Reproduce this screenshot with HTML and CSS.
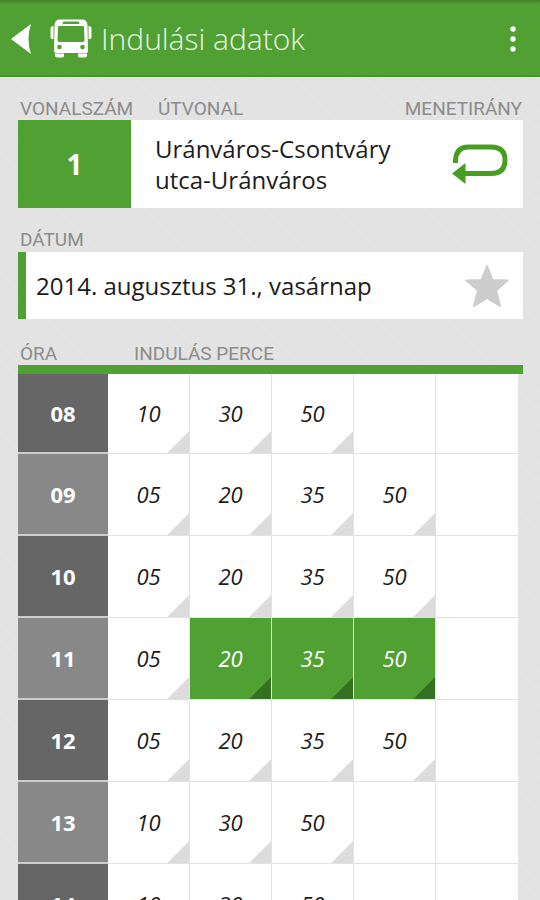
FILE: index.html
```html
<!DOCTYPE html>
<html lang="hu">
<head>
  <meta charset="utf-8">
  <meta name="viewport" content="width=device-width, initial-scale=1">
  <title>Indulási adatok</title>
  <link rel="stylesheet" href="styles.css">
</head>
<body>
  <header class="topbar">
    <button class="back" aria-label="Vissza">
      <svg width="21" height="30" viewBox="0 0 21 30"><path d="M0 15 L20 0 Q15 15 20 30 Z" fill="#fff"/></svg>
    </button>
    <svg class="bus" width="42" height="39" viewBox="0 0 42 39">
      <path fill="#fff" fill-rule="evenodd" d="M9 0.5 H33 Q37 1 37.500 6 L38 32 Q38 34 36 34 H6 Q4 34 4 32 L4.500 6 Q5 1 9 .5 Z M14 2.500 Q12.500 2.500 12.500 4 Q12.500 5 14 5 H28 Q29.500 5 29.500 4 Q29.500 2.500 28 2.500 Z M9 7 Q8 7 8 8 L7.500 21 Q7.500 23 9 23 H33 Q34.500 23 34.500 21 L34 8 Q34 7 33 7 Z"/>
      <path fill="#fff" d="M3.500 7 V20 H2 Q.5 20 .5 18 V10 Q.5 7 3.500 7 Z M38.500 7 V20 H40 Q41.500 20 41.500 18 V10 Q41.500 7 38.500 7 Z M5 34.500 H14 V37 Q13.500 38.500 12 38.500 H7 Q5 38.500 5 36.500 Z M28 34.500 H37 V36.500 Q37 38.500 35 38.500 H30 Q28.500 38.500 28 37 Z"/>
      <circle cx="9.500" cy="28" r="2.300" fill="#50a033"/>
      <circle cx="32.500" cy="28" r="2.300" fill="#50a033"/>
    </svg>
    <h1>Indulási adatok</h1>
    <button class="menu" aria-label="Menü">
      <svg width="6" height="26" viewBox="0 0 6 26" fill="#fff"><circle cx="3" cy="3" r="2.700"/><circle cx="3" cy="13" r="2.700"/><circle cx="3" cy="23" r="2.700"/></svg>
    </button>
  </header>

  <main class="content">
    <section>
      <div class="labels">
        <span class="label-line">VONALSZÁM</span>
        <span>ÚTVONAL</span>
        <span class="label-right">MENETIRÁNY</span>
      </div>
      <div class="card route">
        <div class="line">1</div>
        <div class="stops">Uránváros-Csontváry utca-Uránváros</div>
        <button class="direction" aria-label="Menetirány váltása">
          <svg width="56" height="42" viewBox="0 0 56 42">
            <path d="M3.500 20 V17 Q4.500 4 16 4 H39 Q53 4 53 17 Q53 30.500 39 30.500 H12" fill="none" stroke="#469d22" stroke-width="5"/>
            <path d="M0 30.500 L13.500 20 V41 Z" fill="#469d22"/>
          </svg>
        </button>
      </div>
    </section>

    <section>
      <div class="labels">
        <span>DÁTUM</span>
      </div>
      <div class="card date">
        <button class="date-value">2014. augusztus 31., vasárnap</button>
        <button class="favourite" aria-label="Kedvenc">
          <svg width="44" height="42" viewBox="0 0 44 42">
            <path d="M22 1 L27.500 15 L42.500 15.500 L31 25.500 L35 41 L22 33 L9 41 L13 25.500 L1.500 15.500 L16.500 15 Z" fill="#cdcdcd" stroke="#cdcdcd" stroke-width="2" stroke-linejoin="round"/>
          </svg>
        </button>
      </div>
    </section>

    <section>
      <div class="labels times-head">
        <span class="label-hour" id="hour">ÓRA</span>
        <span id="minutes">INDULÁS PERCE</span>
      </div>
      <table class="times" aria-labelledby="hour minutes">
        <tr>
          <th scope="row">08</th>
          <td class="dep">10</td><td class="dep">30</td><td class="dep">50</td><td></td><td></td>
        </tr>
        <tr>
          <th scope="row">09</th>
          <td class="dep">05</td><td class="dep">20</td><td class="dep">35</td><td class="dep">50</td><td></td>
        </tr>
        <tr>
          <th scope="row">10</th>
          <td class="dep">05</td><td class="dep">20</td><td class="dep">35</td><td class="dep">50</td><td></td>
        </tr>
        <tr>
          <th scope="row">11</th>
          <td class="dep">05</td><td class="dep next">20</td><td class="dep next">35</td><td class="dep next">50</td><td></td>
        </tr>
        <tr>
          <th scope="row">12</th>
          <td class="dep">05</td><td class="dep">20</td><td class="dep">35</td><td class="dep">50</td><td></td>
        </tr>
        <tr>
          <th scope="row">13</th>
          <td class="dep">10</td><td class="dep">30</td><td class="dep">50</td><td></td><td></td>
        </tr>
        <tr>
          <th scope="row">14</th>
          <td class="dep">10</td><td class="dep">30</td><td class="dep">50</td><td></td><td></td>
        </tr>
      </table>
    </section>
  </main>
</body>
</html>
```
FILE: styles.css
```css
* {
  box-sizing: border-box;
}
body {
  display: flex;
  flex-direction: column;
  height: 100vh;
  margin: 0;
  font-family: "Open Sans", "Noto Sans", sans-serif;
  color: #1c1c1c;
  background: repeating-linear-gradient(45deg, #e5e5e5 0 1px, #e2e2e2 1px 3px);
}
button {
  padding: 0;
  border: none;
  background: none;
  font: inherit;
  color: inherit;
  cursor: pointer;
}
svg {
  display: block;
}

/* top bar */
.topbar {
  display: flex;
  flex: none;
  align-items: center;
  height: 77px;
  padding: 2px 24px 0 11px;
  background: linear-gradient(#447f2d, #50a033 4px);
  border-bottom: 2px solid #459527;
}
.bus {
  margin-left: 18px;
}
.topbar h1 {
  flex: 1;
  margin: 0 0 0 9px;
  font-size: 30px;
  font-weight: 300;
  color: #e9f5e4;
}

/* content */
.content {
  flex: 1;
  padding: 20px 17px 0 18px;
  overflow-y: auto;
  scrollbar-width: none;
}
.labels {
  display: flex;
  align-items: flex-end;
  height: 23px;
  padding: 0 1px 0 2px;
  font-family: Roboto, sans-serif;
  font-size: 19px;
  line-height: 22px;
  color: #8c8c8c;
}
.label-line {
  width: 138px;
}
.label-hour {
  width: 114px;
}
.label-right {
  margin-left: auto;
}
.card {
  display: flex;
  align-items: center;
  background: #fff;
}
.route {
  height: 88px;
  margin-bottom: 20px;
  padding-right: 15px;
}
.line {
  display: flex;
  align-items: center;
  justify-content: center;
  align-self: stretch;
  width: 113px;
  font-size: 28px;
  font-weight: 700;
  color: #fff;
  background: #50a033;
}
.stops {
  flex: 1;
  padding: 0 40px 0 24px;
  font-size: 24px;
  line-height: 31px;
}
.date {
  height: 67px;
  margin: 1px 0 24px;
  padding: 0 14px 0 10px;
  border-left: 8px solid #50a033;
}
.date-value {
  flex: 1;
  font-size: 24px;
  text-align: left;
}

/* departures */
.times-head {
  height: 31px;
  border-bottom: 9px solid #50a033;
}
.times {
  width: calc(100% - 5px);
  table-layout: fixed;
  border-collapse: separate;
  border-spacing: 0;
  background: #fff;
}
.times th,
.times td {
  height: 82px;
  padding: 0 0 1px;
  text-align: center;
  font-size: 22px;
  border-bottom: 1px solid #e2e2e2;
}
.times th {
  width: 18%;
  padding: 0;
  color: #fff;
  background: #666;
  border-bottom: 2px solid #ccc;
}
.times tr:nth-child(even) th {
  background: #888;
}
.times td {
  font-style: italic;
  border-right: 1px solid #e2e2e2;
}
.times td:last-child {
  border-right: none;
}
.times tr:first-child th,
.times tr:first-child td {
  height: 80px;
}
.dep {
  background: linear-gradient(135deg, transparent 49%, #dcdcdc 52%) right bottom / 22px 22px no-repeat;
}
.dep.next {
  color: #fff;
  background-color: #50a033;
  background-image: linear-gradient(135deg, transparent 49%, #347022 52%);
}
```
